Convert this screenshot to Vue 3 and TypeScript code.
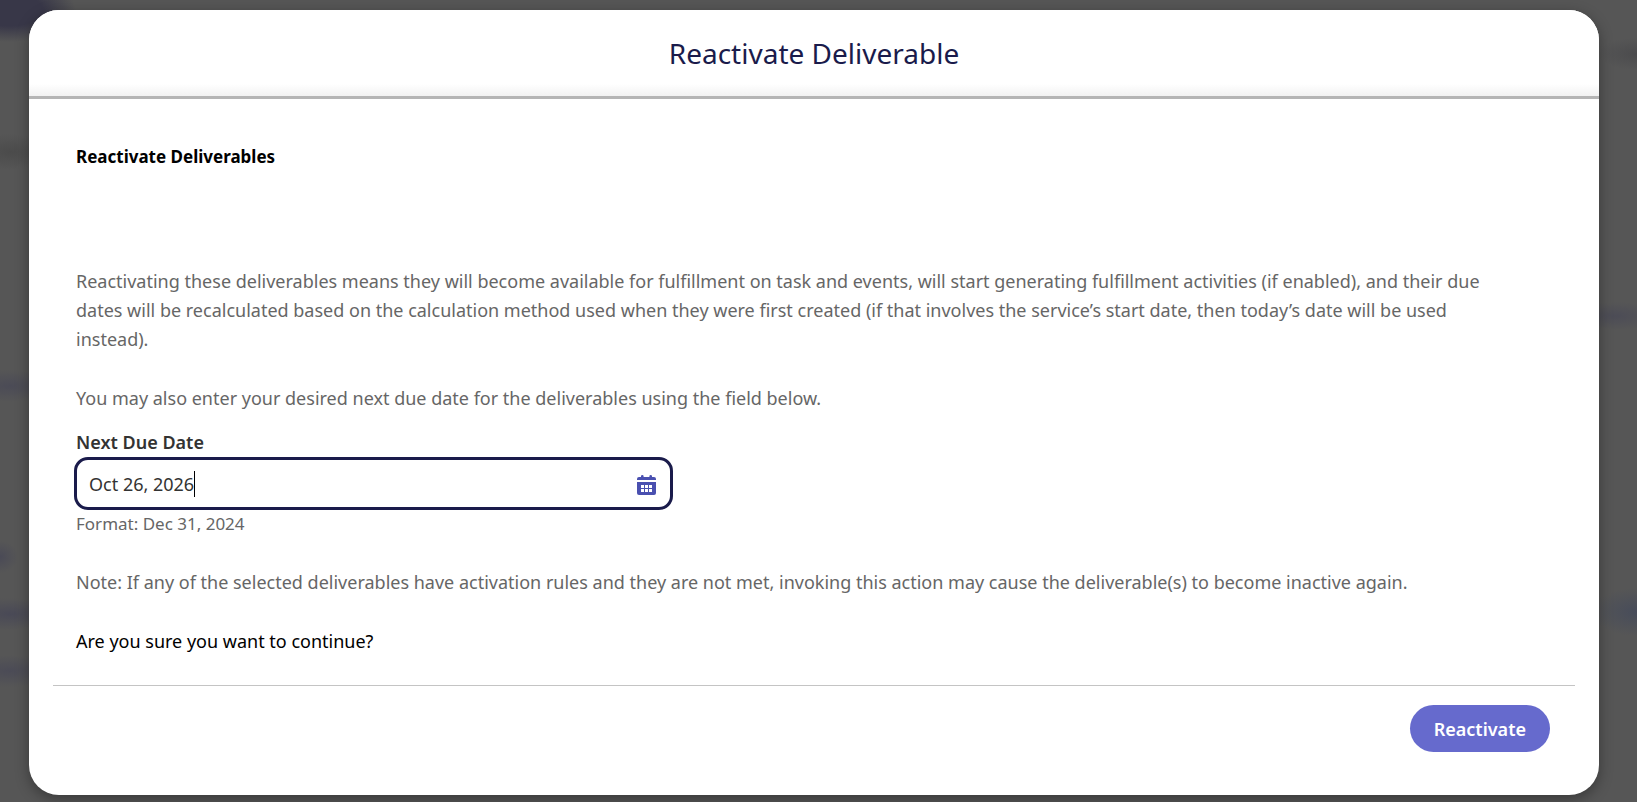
<script setup lang="ts">
import { ref } from 'vue'

const dueDate = ref('Oct 26, 2026')
</script>

<template>
  <div class="backdrop">
    <section class="modal" role="dialog" aria-modal="true" aria-labelledby="modal-title">
      <header class="modal-header">
        <h1 id="modal-title">Reactivate Deliverable</h1>
      </header>
      <form class="modal-form" @submit.prevent>
        <div class="content">
          <h2>Reactivate Deliverables</h2>
          <p>
            Reactivating these deliverables means they will become available for fulfillment on task and events, will start generating fulfillment activities (if enabled), and their due dates will be recalculated based on the calculation method used when they were first created (if that involves the service’s start date, then today’s date will be used instead).
          </p>
          <p>You may also enter your desired next due date for the deliverables using the field below.</p>
          <div class="field">
            <label class="field-label" for="due-date">Next Due Date</label>
            <div class="control">
              <input id="due-date" v-model="dueDate" type="text" aria-describedby="due-hint" />
              <span class="caret" aria-hidden="true"></span>
              <button class="picker" type="button" aria-label="Choose date">
                <svg viewBox="0 0 19 20" width="19" height="20" aria-hidden="true">
                  <path d="M4 2V1.300a1.300 1.300 0 0 1 2.600 0V2h5.800V1.300a1.300 1.300 0 0 1 2.600 0V2h2a2 2 0 0 1 2 2v1H0V4a2 2 0 0 1 2-2z" fill="#4a50b0" />
                  <path d="M0 7h19v11a2 2 0 0 1-2 2H2a2 2 0 0 1-2-2z" fill="#4a50b0" />
                  <path d="M4 10h3v3H4zm4 0h3v3H8zm4 0h3v3h-3zM4 14h3v3H4zm4 0h3v3H8zm4 0h3v3h-3z" fill="#fff" />
                </svg>
              </button>
            </div>
            <small id="due-hint">Format: Dec 31, 2024</small>
          </div>
          <p>Note: If any of the selected deliverables have activation rules and they are not met, invoking this action may cause the deliverable(s) to become inactive again.</p>
          <p class="question">Are you sure you want to continue?</p>
        </div>
        <footer>
          <button class="submit" type="submit">Reactivate</button>
        </footer>
      </form>
    </section>
  </div>
</template>

<style>
body {
  margin: 0;
}
</style>

<style scoped>
* {
  box-sizing: border-box;
}

.backdrop {
  display: grid;
  min-height: 100vh;
  padding: 10px 38px 7px 29px;
  background:
    radial-gradient(ellipse 66px 32px at 10px 10px, #383748 50%, transparent),
    radial-gradient(ellipse 40px 18px at 10px 152px, #4b4b4b, transparent),
    radial-gradient(ellipse 50px 16px at 10px 386px, #4b4b56, transparent),
    radial-gradient(ellipse 18px 16px at 0 557px, #4a4a56, transparent),
    radial-gradient(ellipse 50px 16px at 10px 614px, #494956, transparent),
    radial-gradient(ellipse 50px 16px at 10px 671px, #4b4b56, transparent),
    radial-gradient(ellipse 40px 16px at 100% 54px, #4b4b4d, transparent),
    radial-gradient(ellipse 46px 14px at 1615px 316px, #4c4c56, transparent),
    radial-gradient(ellipse 46px 24px at 100% 612px, #474c5a, transparent),
    #565656;
  font-family: "Segoe UI", "Noto Sans", "Open Sans", sans-serif;
}

.modal {
  display: flex;
  flex-direction: column;
  min-width: 0;
  border-radius: 30px;
  background: #fff;
  box-shadow: 0 4px 14px rgb(0 0 0 / 35%);
  overflow: hidden;
}

.modal-header {
  padding: 21px 24px;
  border-bottom: 3px solid #b5b5b5;
  background: linear-gradient(to top, #f2f2f2, #fff 12px);
}

h1 {
  margin: 0;
  color: #1a1b4b;
  font-size: 28px;
  font-weight: 400;
  line-height: 44px;
  text-align: center;
}

.modal-form {
  display: flex;
  flex: 1;
  flex-direction: column;
  padding: 0 24px;
}

.content {
  display: flex;
  flex-direction: column;
  gap: 30px;
  padding: 44px 60px 29px 23px;
}

h2 {
  margin: 0 0 66px;
  color: #000;
  font-size: 17px;
  font-weight: 700;
  line-height: 28px;
}

p {
  margin: 0;
  color: #666;
  font-size: 18px;
  line-height: 29px;
}

.question {
  color: #000;
}

.field {
  display: flex;
  flex-direction: column;
  align-items: flex-start;
  width: 100%;
  max-width: 595px;
  margin-top: -16px;
}

.field-label {
  color: #333;
  font-size: 18px;
  font-weight: 600;
  line-height: 30px;
}

.control {
  display: flex;
  align-items: center;
  align-self: stretch;
  height: 53px;
  margin: 0 -2px;
  padding: 0 14px 0 12px;
  border: 3px solid #1a1b4b;
  border-radius: 14px;
}

input {
  field-sizing: content;
  min-width: 0;
  padding: 0;
  border: 0;
  outline: 0;
  background: transparent;
  color: #333;
  font: inherit;
  font-size: 18px;
  line-height: 28px;
}

.caret {
  width: 1px;
  height: 26px;
  background: #000;
}

.picker {
  display: flex;
  margin-left: auto;
  padding: 3px 0 0;
  border: 0;
  background: none;
}

small {
  color: #666;
  font-size: 17px;
  line-height: 28px;
}

footer {
  display: flex;
  justify-content: flex-end;
  padding: 19px 25px 43px;
  border-top: 1px solid #c4c4c4;
}

.submit {
  height: 47px;
  padding: 0 24px;
  border: 0;
  border-radius: 24px;
  background: #666acd;
  color: #fff;
  font: inherit;
  font-size: 18px;
  font-weight: 600;
}
</style>
